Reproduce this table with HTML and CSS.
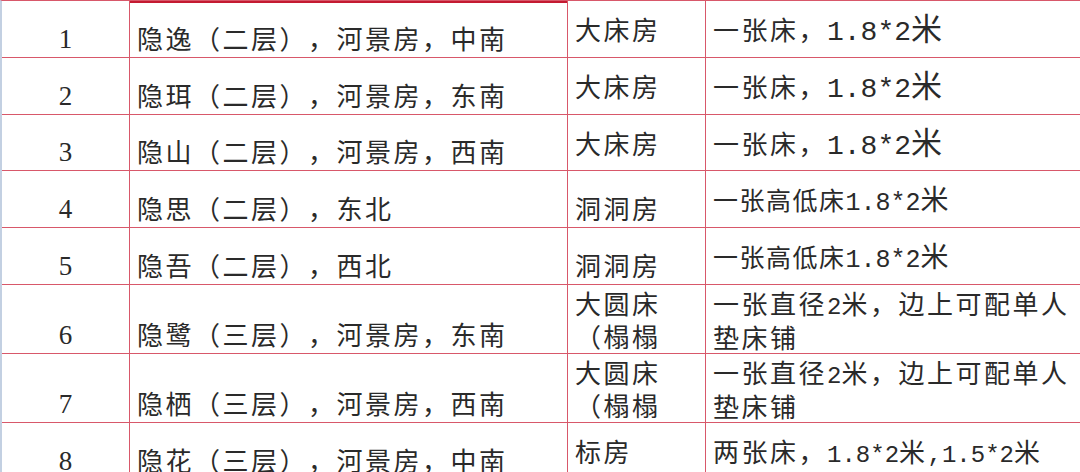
FILE: index.html
```html
<!DOCTYPE html>
<html lang="zh-CN">
<head>
<meta charset="utf-8">
<title>房型表</title>
<link rel="stylesheet" href="styles.css">
</head>
<body>
<table class="sheet">
  <colgroup>
    <col class="c-no">
    <col class="c-name">
    <col class="c-type">
    <col class="c-bed">
  </colgroup>
  <tbody>
    <tr class="h57">
      <td class="no">1</td>
      <td class="name sel">隐逸（二层），河景房，中南</td>
      <td class="type mid">大床房</td>
      <td class="bed mid">一张床，<span class="big">1.8*2</span><span class="bigcn">米</span></td>
    </tr>
    <tr class="h57">
      <td class="no">2</td>
      <td class="name">隐珥（二层），河景房，东南</td>
      <td class="type mid">大床房</td>
      <td class="bed mid">一张床，<span class="big">1.8*2</span><span class="bigcn">米</span></td>
    </tr>
    <tr class="h56">
      <td class="no">3</td>
      <td class="name">隐山（二层），河景房，西南</td>
      <td class="type mid">大床房</td>
      <td class="bed mid">一张床，<span class="big">1.8*2</span><span class="bigcn">米</span></td>
    </tr>
    <tr class="h57">
      <td class="no">4</td>
      <td class="name">隐思（二层），东北</td>
      <td class="type bottom">洞洞房</td>
      <td class="bed mid small">一张高低床<span class="num25">1.8*2</span><span class="cn27">米</span></td>
    </tr>
    <tr class="h57">
      <td class="no">5</td>
      <td class="name">隐吾（二层），西北</td>
      <td class="type bottom">洞洞房</td>
      <td class="bed mid small">一张高低床<span class="num25">1.8*2</span><span class="cn27">米</span></td>
    </tr>
    <tr class="h68">
      <td class="no">6</td>
      <td class="name">隐鹭（三层），河景房，东南</td>
      <td class="type top two">大圆床<br>（榻榻</td>
      <td class="bed top two">一张直径<span class="num">2</span>米，边上可配单人<br>垫床铺</td>
    </tr>
    <tr class="h69">
      <td class="no">7</td>
      <td class="name">隐栖（三层），河景房，西南</td>
      <td class="type top two">大圆床<br>（榻榻</td>
      <td class="bed top two">一张直径<span class="num">2</span>米，边上可配单人<br>垫床铺</td>
    </tr>
    <tr class="h57">
      <td class="no">8</td>
      <td class="name">隐花（三层），河景房，中南</td>
      <td class="type mid">标房</td>
      <td class="bed mid">两张床，<span class="num">1.8*2</span>米<span class="num">,</span><span class="num">1.5*2</span>米</td>
    </tr>
  </tbody>
</table>
</body>
</html>
```
FILE: styles.css
```css
html, body {
  margin: 0;
  padding: 0;
  background: #ffffff;
  overflow: hidden;
}

.sheet {
  border-collapse: separate;
  border-spacing: 0;
  table-layout: fixed;
  width: 1080px;
  border-top: 1px solid #d8586a;
  border-left: 2px solid #c3d0e2;
  font-family: "Noto Sans CJK SC", "Liberation Serif", sans-serif;
  color: #2a2a2a;
  text-spacing-trim: space-all;
  font-feature-settings: "chws" 0, "halt" 0, "palt" 0;
}

.c-no { width: 128px; }
.c-name { width: 438px; }
.c-type { width: 138px; }
.c-bed { width: 376px; }

.sheet td {
  padding: 0 0 0 7px;
  border-right: 1px solid #d8586a;
  border-bottom: 1px solid #d8586a;
  font-size: 26px;
  letter-spacing: 2.5px;
  line-height: 34px;
  white-space: nowrap;
  overflow: hidden;
}

.sheet td.bed {
  border-right: none;
}

.h57 { height: 57px; }
.h56 { height: 56px; }
.h68 { height: 68px; }
.h69 { height: 69px; }

.sheet td.no {
  font-family: "Liberation Serif", serif;
  text-align: center;
  vertical-align: bottom;
  letter-spacing: 0;
  padding: 0 0 2px 0;
  font-size: 27px;
  line-height: 32px;
}

.sheet td.name {
  vertical-align: bottom;
  padding-bottom: 2px;
}

.mid { vertical-align: middle; }
.sheet td.bottom { vertical-align: bottom; padding-bottom: 2px; }
.top { vertical-align: top; }

.sheet td.two {
  line-height: 33px;
  padding-top: 1px;
}

.sel {
  box-shadow: inset 0 2px 0 #c41a32;
}

.big {
  font-family: "Liberation Mono", monospace;
  font-size: 28px;
  letter-spacing: 0;
  line-height: 1;
}

.bigcn {
  font-size: 31px;
  letter-spacing: 0;
  line-height: 1;
}

.sheet td.small {
  font-size: 25px;
  letter-spacing: 1.5px;
}

.num25 {
  font-family: "Liberation Mono", monospace;
  font-size: 25px;
  letter-spacing: 0;
  line-height: 1;
}

.cn27 {
  font-size: 28px;
  letter-spacing: 0;
  line-height: 1;
}

.num {
  font-family: "Liberation Mono", monospace;
  font-size: 24px;
  letter-spacing: 0;
  line-height: 1;
}
```
